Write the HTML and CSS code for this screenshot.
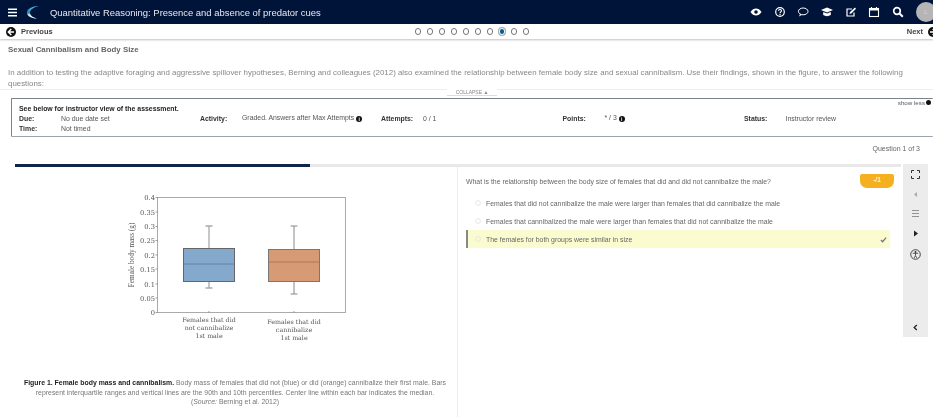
FILE: index.html
```html
<!DOCTYPE html>
<html lang="en">
<head>
<meta charset="utf-8">
<title>Quantitative Reasoning</title>
<link rel="stylesheet" href="styles.css">
</head>
<body>
<header class="topbar">
  <svg class="burger" viewBox="0 0 9 9" width="9" height="9"><path d="M0 0.500h9v1.600H0zM0 3.700h9v1.600H0zM0 6.900h9v1.600H0z" fill="#fff"/></svg>
  <svg class="logo" viewBox="0 0 14 14" width="14" height="14"><defs><linearGradient id="lg" x1="0" y1="0" x2="0" y2="1"><stop offset="0" stop-color="#52c3ee"/><stop offset="0.550" stop-color="#2a7fb0"/><stop offset="0.700" stop-color="#cfe6f2"/><stop offset="1" stop-color="#ffffff"/></linearGradient></defs><path d="M13 1C6 1 1 4 1 7.500 1 11 5 13.500 11 13.500 7 12.500 4 10.500 4 7.500 4 5 8 2 13 1z" fill="url(#lg)"/></svg>
  <div class="course">Quantitative Reasoning: Presence and absence of predator cues</div>
  <nav class="tools">
    <svg viewBox="0 0 12 12" width="12" height="12"><path d="M0.500 6C2 3.500 4 2.500 6 2.500S10 3.500 11.500 6C10 8.500 8 9.500 6 9.500S2 8.500 0.500 6z" fill="#fff"/><circle cx="6" cy="6" r="1.800" fill="#00143a"/></svg>
    <svg viewBox="0 0 12 12" width="12" height="12"><circle cx="6" cy="6" r="4.300" fill="none" stroke="#fff" stroke-width="1.200"/><path d="M4.500 4.800C4.500 3 7.500 3 7.500 4.800 7.500 6 6 6 6 7.200" fill="none" stroke="#fff" stroke-width="1.100"/><rect x="5.400" y="8" width="1.200" height="1.200" fill="#fff"/></svg>
    <svg viewBox="0 0 12 12" width="12" height="12"><ellipse cx="6.200" cy="5.400" rx="4.800" ry="3.400" fill="none" stroke="#fff" stroke-width="1"/><path d="M3 8L2 10.500 5 8.700z" fill="#fff"/></svg>
    <svg viewBox="0 0 12 12" width="12" height="12"><path d="M6 1.500L12 4 6 6.500 0 4z" fill="#fff"/><path d="M2.200 6V9C4.500 10.500 7.500 10.500 9.800 9V6L6 7.500z" fill="#fff"/></svg>
    <svg viewBox="0 0 12 12" width="12" height="12"><path d="M9 6.500V10H2V3h5" fill="none" stroke="#fff" stroke-width="1.200"/><path d="M4.500 8L5 6 10 1.500 11 2.800 6.300 7.500z" fill="#fff"/></svg>
    <svg viewBox="0 0 12 12" width="12" height="12"><rect x="1.500" y="2.500" width="9" height="8" fill="none" stroke="#fff" stroke-width="1.100"/><path d="M1.500 2.500h9v2h-9z" fill="#fff"/><path d="M3.500 1v2M8.500 1v2" stroke="#fff" stroke-width="1.100"/></svg>
    <svg viewBox="0 0 12 12" width="12" height="12"><circle cx="5" cy="5" r="3.300" fill="none" stroke="#fff" stroke-width="1.700"/><path d="M7.500 7.500L10.800 10.800" stroke="#fff" stroke-width="2"/></svg>
  </nav>
  <div class="avatar">L</div>
</header>

<div class="pager">
  <div class="prev">
    <svg class="arrow" viewBox="0 0 10 10" width="10" height="10"><circle cx="5" cy="5" r="5" fill="#111"/><path d="M5.300 2L2.300 5 5.300 8M2.600 5H8" fill="none" stroke="#fff" stroke-width="1.400"/></svg>
    <span>Previous</span>
  </div>
  <div class="dots">
    <i class="dot"></i><i class="dot"></i><i class="dot"></i><i class="dot"></i><i class="dot"></i><i class="dot"></i><i class="dot"></i><i class="dot current"></i><i class="dot"></i><i class="dot"></i>
  </div>
  <div class="next">
    <span>Next</span>
    <svg class="arrow" viewBox="0 0 10 10" width="10" height="10"><circle cx="5" cy="5" r="5" fill="#111"/><path d="M4.700 2L7.700 5 4.700 8M7.400 5H2" fill="none" stroke="#fff" stroke-width="1.400"/></svg>
  </div>
</div>

<section class="intro">
  <h1 class="intro-title">Sexual Cannibalism and Body Size</h1>
  <p class="intro-text">In addition to testing the adaptive foraging and aggressive spillover hypotheses, Berning and colleagues (2012) also examined the relationship between female body size and sexual cannibalism. Use their findings, shown in the figure, to answer the following questions:</p>
</section>

<div class="collapse-row"><span class="collapse-tab">COLLAPSE &#9650;</span></div>

<section class="info">
  <div class="show-less">show less <i class="mini-dot"></i></div>
  <div class="info-head">See below for instructor view of the assessment.</div>
  <div class="info-grid">
    <b>Due:</b><span>No due date set</span>
    <b>Activity:</b><span>Graded. Answers after Max Attempts <i class="info-i">i</i></span>
    <b>Attempts:</b><span>0 / 1</span>
    <b>Points:</b><span>* / 3 <i class="info-i">i</i></span>
    <b>Status:</b><span>Instructor review</span>
    <b>Time:</b><span>Not timed</span>
  </div>
</section>

<div class="q-count">Question 1 of 3</div>

<main class="workspace">
  <div class="content">
    <div class="progress"><div class="progress-fill"></div></div>
    <div class="panes">
      <section class="figure-pane">
        <svg class="chart" viewBox="0 0 240 165" width="240" height="165">
          <g class="ticks" stroke="#777" stroke-width="0.700">
            <rect x="37.500" y="12.500" width="188" height="115" fill="none" stroke="#aaa" stroke-width="1"/>
            <path d="M37.500 12.500h-2M37.500 27h-2M37.500 41.500h-2M37.500 55.500h-2M37.500 70h-2M37.500 84h-2M37.500 99h-2M37.500 113h-2M37.500 127.500h-2M89 127.500v-1.500M174 127.500v-1.500"/>
          </g>
          <g class="tick-labels">
            <text x="35" y="15">0.4</text><text x="35" y="30">0.35</text><text x="35" y="44">0.3</text><text x="35" y="58">0.25</text><text x="35" y="73">0.2</text><text x="35" y="87">0.15</text><text x="35" y="102">0.1</text><text x="35" y="116">0.05</text><text x="35" y="130">0</text>
          </g>
          <text class="y-label" transform="translate(14 70) rotate(-90)">Female body mass (g)</text>
          <path d="M89 41v23M85.500 41h7M89 97v6M85.500 103h7" stroke="#aaa" stroke-width="1.300" fill="none"/>
          <rect x="63.500" y="63.500" width="51" height="33" fill="#85a9cd" stroke="#666" stroke-width="1"/>
          <path d="M63.500 79h51" stroke="#5a7a9c" stroke-width="0.800"/>
          <path d="M174 41v23M170.500 41h7M174 97v12M170.500 109h7" stroke="#888" stroke-width="1" fill="none"/>
          <rect x="148.500" y="64.500" width="51" height="32" fill="#d69a74" stroke="#777" stroke-width="1"/>
          <path d="M148.500 77h51" stroke="#a8724e" stroke-width="0.800"/>
          <g class="cat-labels">
            <text x="89" y="137">Females that did</text><text x="89" y="145">not cannibalize</text><text x="89" y="153">1st male</text>
            <text x="174" y="139">Females that did</text><text x="174" y="147">cannibalize</text><text x="174" y="155">1st male</text>
          </g>
        </svg>
        <p class="caption"><b>Figure 1. Female body mass and cannibalism.</b> Body mass of females that did not (blue) or did (orange) cannibalize their first male. Bars represent interquartile ranges and vertical lines are the 90th and 10th percentiles. Center line within each bar indicates the median.<br>(<em>Source:</em> Berning et al. 2012)</p>
      </section>
      <section class="question-pane">
        <div class="q-head">
          <p class="q-text">What is the relationship between the body size of females that did and did not cannibalize the male?</p>
          <div class="score">-/1</div>
        </div>
        <div class="answer"><i class="radio"></i><span>Females that did not cannibalize the male were larger than females that did cannibalize the male</span></div>
        <div class="answer"><i class="radio"></i><span>Females that cannibalized the male were larger than females that did not cannibalize the male</span></div>
        <div class="answer correct"><i class="radio"></i><span>The females for both groups were similar in size</span>
          <svg class="check" viewBox="0 0 8 8" width="7" height="7"><path d="M1 4.500L3 6.500 7 1.800" fill="none" stroke="#777" stroke-width="1.500"/></svg>
        </div>
      </section>
    </div>
  </div>
  <aside class="rail">
    <svg viewBox="0 0 9 9" width="9" height="9"><path d="M0.500 3V0.500H3M6 0.500H8.500V3M8.500 6V8.500H6M3 8.500H0.500V6" fill="none" stroke="#333" stroke-width="1"/></svg>
    <svg viewBox="0 0 9 9" width="9" height="9"><path d="M6 2L3 4.500 6 7z" fill="#aaa"/></svg>
    <svg viewBox="0 0 9 9" width="9" height="9"><path d="M1 1.500h7M1 4.500h7M1 7.500h7" stroke="#888" stroke-width="0.900"/></svg>
    <svg viewBox="0 0 9 9" width="9" height="9"><path d="M3 1.500L7 4.500 3 7.500z" fill="#222"/></svg>
    <svg class="a11y" viewBox="0 0 11 11" width="11" height="11"><circle cx="5.500" cy="5.500" r="4.800" fill="none" stroke="#333" stroke-width="0.900"/><circle cx="5.500" cy="3" r="0.900" fill="#333"/><path d="M2.800 4.300h5.400M5.500 4.300v2.500M5.500 6.800L4 9M5.500 6.800L7 9" stroke="#333" stroke-width="0.800" fill="none"/></svg>
    <svg class="rail-end" viewBox="0 0 9 9" width="9" height="9"><path d="M5.800 2L3.200 4.500 5.800 7" fill="none" stroke="#222" stroke-width="1.300"/></svg>
  </aside>
</main>
</body>
</html>
```

FILE: styles.css
```css
* { box-sizing: border-box; }
html, body { margin: 0; padding: 0; height: 417px; overflow: hidden; background: #fff; }
body { font-family: "Liberation Sans", Arial, sans-serif; font-size: 7px; color: #666; width: 933px; filter: blur(0.3px); }
p, h1 { margin: 0; }
i { font-style: normal; }

.topbar { display: flex; align-items: center; height: 24px; background: #00143a; padding-left: 8px; }
.burger { flex: none; }
.logo { flex: none; margin-left: 9px; }
.course { margin-left: 10px; font-size: 9.450px; color: #e6e9ee; white-space: nowrap; }
.tools { margin-left: auto; display: flex; gap: 11.700px; align-items: center; }
.avatar { flex: none; width: 20px; height: 20px; margin: 0 -3px 0 12px; border-radius: 50%; background: #b5b5b5; color: #d8d8d8; font-size: 6px; display: flex; align-items: center; justify-content: center; }

.pager { position: relative; display: flex; align-items: center; height: 15px; padding: 0 0 0 6px; background: #fff; box-shadow: 0 1px 2px rgba(0,0,0,.25); }
.prev, .next { display: flex; align-items: center; gap: 5px; font-size: 7.500px; font-weight: 700; color: #444; }
.prev { width: 409px; }
.dots { display: flex; gap: 5.700px; align-items: center; }
.dot { display: block; width: 6.300px; height: 6.300px; border: 0.800px solid #777; border-radius: 50%; }
.dot.current { background: #00608f; box-shadow: 0 0 0 1px #aaa; border-color: #fff; }
.next { margin-left: auto; margin-right: -5px; }

.intro { padding: 6px 8px 0; }
.intro-title { font-size: 7.900px; line-height: 10px; font-weight: 700; color: #666; }
.intro-text { margin-top: 12px; font-size: 7.900px; line-height: 11px; color: #888; width: 900px; }

.collapse-row { position: relative; height: 9px; border-top: 1px solid #eee; }
.collapse-tab { position: absolute; left: 447px; top: -1px; width: 50px; height: 7px; background: #fff; border-bottom: 1px solid #ddd; font-size: 5px; line-height: 6px; color: #888; text-align: center; white-space: nowrap; }

.info { position: relative; margin-left: 11px; width: 922px; height: 39px; border: 1px solid #7e8388; border-right: 0; border-bottom: 1px solid #9aa3b0; border-radius: 1px; padding: 5px 7px; font-size: 6.900px; color: #555; }
.show-less { position: absolute; top: 0; right: 2px; font-size: 6.200px; color: #555; display: flex; align-items: center; gap: 1px; white-space: nowrap; }
.mini-dot { display: block; width: 5px; height: 5px; border-radius: 50%; background: #111; }
.info-head { font-weight: 700; color: #222; line-height: 9px; }
.info-grid { display: grid; grid-template-columns: 42px 139px 42px 139px 42px 139.500px 42px 139.500px 41.500px 100px; grid-auto-rows: 10px; align-items: center; }
.info-grid b { color: #333; }
.info-i { display: inline-block; width: 6px; height: 6px; border-radius: 50%; background: #111; color: #fff; font-size: 5px; line-height: 6px; text-align: center; font-weight: 700; vertical-align: -0.500px; }

.q-count { height: 27px; padding: 8px 13px 0 0; text-align: right; font-size: 7px; line-height: 8px; color: #666; }

.workspace { display: flex; align-items: flex-start; padding-left: 15px; }
.content { width: 886px; flex: none; margin-right: 2px; }
.progress { height: 3px; background: #e8e8e8; }
.progress-fill { width: 295px; height: 100%; background: #10254c; }
.panes { display: flex; }
.figure-pane { flex: none; width: 443px; height: 260px; border-right: 1px solid #eee; padding-top: 18px; }
.chart { display: block; margin-left: 105px; }
.tick-labels text { font-family: "DejaVu Serif", serif; font-size: 6.700px; text-anchor: end; fill: #555; }
.y-label { font-family: "Liberation Serif", serif; font-size: 7.300px; text-anchor: middle; fill: #555; }
.cat-labels text { font-family: "DejaVu Serif", serif; font-size: 6.300px; text-anchor: middle; fill: #555; }
.caption { margin: 28px 0 0 0; width: 440px; text-align: center; font-size: 6.900px; line-height: 9.500px; color: #777; }
.caption b { color: #222; }

.question-pane { flex: 1; padding: 7px 0 0 8px; }
.q-head { display: flex; justify-content: space-between; align-items: flex-start; height: 20px; padding-right: 7px; }
.q-text { font-size: 6.900px; line-height: 9px; padding-top: 3px; color: #666; }
.score { width: 34px; height: 14px; background: #f4b01e; border-radius: 2px 2px 7px 7px; color: #fff5d8; font-size: 6.500px; line-height: 11px; text-align: center; font-weight: 700; }
.answer { display: flex; align-items: center; height: 18px; width: 424px; padding-left: 9px; font-size: 6.900px; color: #666; }
.answer span { margin-left: 5px; }
.radio { display: block; width: 6px; height: 6px; border: 0.700px solid #e8e8e8; border-radius: 50%; }
.correct { background: #fbfbd0; border-left: 2px solid #888; padding-left: 7px; }
.check { margin-left: auto; margin-right: 3px; }

.rail { flex: none; display: flex; flex-direction: column; align-items: center; width: 25px; height: 173px; background: #ececec; padding-top: 6px; gap: 10.700px; }
.rail-end { margin-top: auto; margin-bottom: 5px; }
```
